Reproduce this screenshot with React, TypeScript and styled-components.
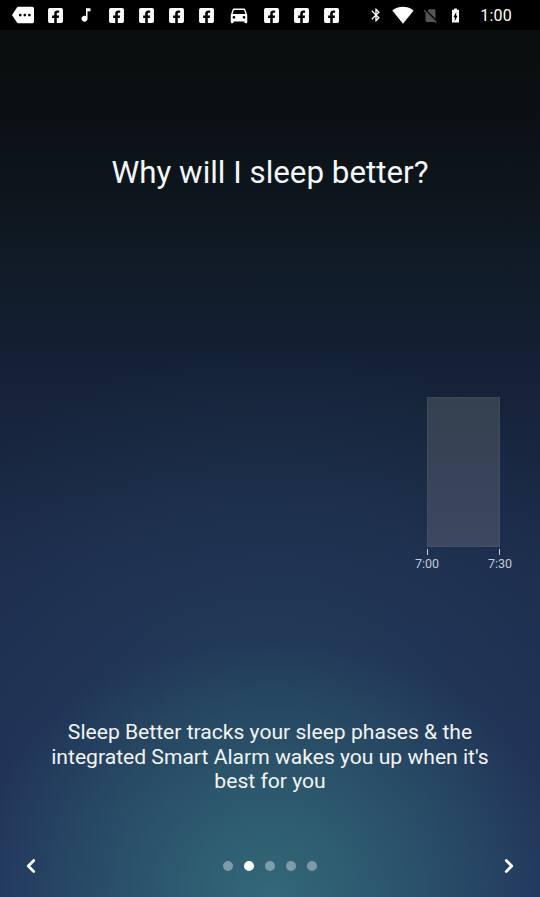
import React from "react";
import styled, { createGlobalStyle } from "styled-components";
import { FaFacebookSquare } from "react-icons/fa";
import {
  MdMore,
  MdMusicNote,
  MdDirectionsCar,
  MdBluetooth,
  MdSignalWifi4Bar,
  MdSignalCellularNoSim,
  MdBatteryChargingFull,
} from "react-icons/md";
import { ChevronLeft, ChevronRight } from "lucide-react";

const Global = createGlobalStyle`
  html, body { margin: 0; padding: 0; }
  body {
    width: 540px;
    height: 897px;
    overflow: hidden;
    font-family: Roboto, "Liberation Sans", sans-serif;
    background: #0a0d0b;
  }
`;

const Screen = styled.div`
  width: 540px;
  height: 897px;
  display: flex;
  flex-direction: column;
  color: #fff;
  background:
    radial-gradient(ellipse 300px 260px at 50% 100%, rgba(56, 120, 128, 0.75), rgba(56, 120, 128, 0) 100%),
    radial-gradient(ellipse 420px 420px at 50% 85%, rgba(40, 80, 105, 0.5), rgba(40, 80, 105, 0) 100%),
    linear-gradient(180deg, #0a0d0b 0px, #0b1014 120px, #0f1a24 250px, #16233a 400px, #1c2a4a 560px, #20305a 897px);
`;

const StatusBar = styled.div`
  height: 30px;
  flex: none;
  background: #000;
  display: flex;
  align-items: center;
  padding: 0 28px 0 12px;
`;

const Notifs = styled.div`
  display: flex;
  align-items: center;
  gap: 13px;
  flex: 1;
`;

const Sys = styled.div`
  display: flex;
  align-items: center;
  gap: 8px;
`;

const Icon = styled.span<{ $dim?: boolean }>`
  display: flex;
  color: ${(p) => (p.$dim ? "#555" : "#fff")};
`;

const Time = styled.span`
  font-size: 16px;
  color: #fff;
  margin-left: 8px;
  letter-spacing: 0.2px;
`;

const Title = styled.h1`
  margin: 125px 0 0;
  font-weight: 400;
  font-size: 31.3px;
  line-height: 36px;
  text-align: center;
  color: #f4f6f8;
`;

const Chart = styled.div`
  align-self: flex-end;
  margin: 206px 40px 0 0;
  width: 73px;
  display: flex;
  flex-direction: column;
`;

const Bar = styled.div`
  height: 150px;
  background: linear-gradient(180deg, #35404f, #3b4860);
  box-shadow: inset 0 0 0 1px rgba(255, 255, 255, 0.05);
`;

const Ticks = styled.div`
  display: flex;
  justify-content: space-between;
  margin-top: 2px;
  height: 6px;
`;

const Tick = styled.span`
  width: 1px;
  background: #c8ced8;
`;

const Labels = styled.div`
  display: flex;
  justify-content: space-between;
  margin: 2px -15px 0;
  font-size: 12.5px;
  line-height: 14px;
  color: #c3c9d4;
`;

const Label = styled.span`
  width: 30px;
  text-align: center;
`;

const Description = styled.p`
  margin: 149px 0 0;
  padding: 0 40px;
  font-size: 21.1px;
  line-height: 24.5px;
  text-align: center;
  color: #f2f4f6;
`;

const Nav = styled.div`
  margin-top: 52px;
  height: 40px;
  display: flex;
  align-items: center;
  justify-content: space-between;
  padding: 0 20px 0 20px;
`;

const Arrow = styled.span`
  display: flex;
  color: #fff;
`;

const Dots = styled.div`
  display: flex;
  gap: 11px;
  margin-left: 0px;
`;

const Dot = styled.span<{ $active?: boolean }>`
  width: 10px;
  height: 10px;
  border-radius: 50%;
  background: ${(p) => (p.$active ? "#ffffff" : "rgba(190, 205, 210, 0.55)")};
`;

export default function App() {
  const fb = <Icon><FaFacebookSquare size={17} /></Icon>;
  return (
    <>
      <Global />
      <Screen>
        <StatusBar>
          <Notifs>
            <Icon><MdMore size={22} /></Icon>
            {fb}
            <Icon><MdMusicNote size={18} /></Icon>
            {fb}
            {fb}
            {fb}
            {fb}
            <Icon><MdDirectionsCar size={22} /></Icon>
            {fb}
            {fb}
            {fb}
          </Notifs>
          <Sys>
            <Icon><MdBluetooth size={16} /></Icon>
            <Icon><MdSignalWifi4Bar size={22} /></Icon>
            <Icon $dim><MdSignalCellularNoSim size={17} /></Icon>
            <Icon><MdBatteryChargingFull size={17} /></Icon>
            <Time>1:00</Time>
          </Sys>
        </StatusBar>
        <Title>Why will I sleep better?</Title>
        <Chart>
          <Bar />
          <Ticks>
            <Tick />
            <Tick />
          </Ticks>
          <Labels>
            <Label>7:00</Label>
            <Label>7:30</Label>
          </Labels>
        </Chart>
        <Description>
          Sleep Better tracks your sleep phases &amp; the integrated Smart Alarm wakes you up when it's best for you
        </Description>
        <Nav>
          <Arrow><ChevronLeft size={22} strokeWidth={3} /></Arrow>
          <Dots>
            <Dot />
            <Dot $active />
            <Dot />
            <Dot />
            <Dot />
          </Dots>
          <Arrow><ChevronRight size={22} strokeWidth={3} /></Arrow>
        </Nav>
      </Screen>
    </>
  );
}
